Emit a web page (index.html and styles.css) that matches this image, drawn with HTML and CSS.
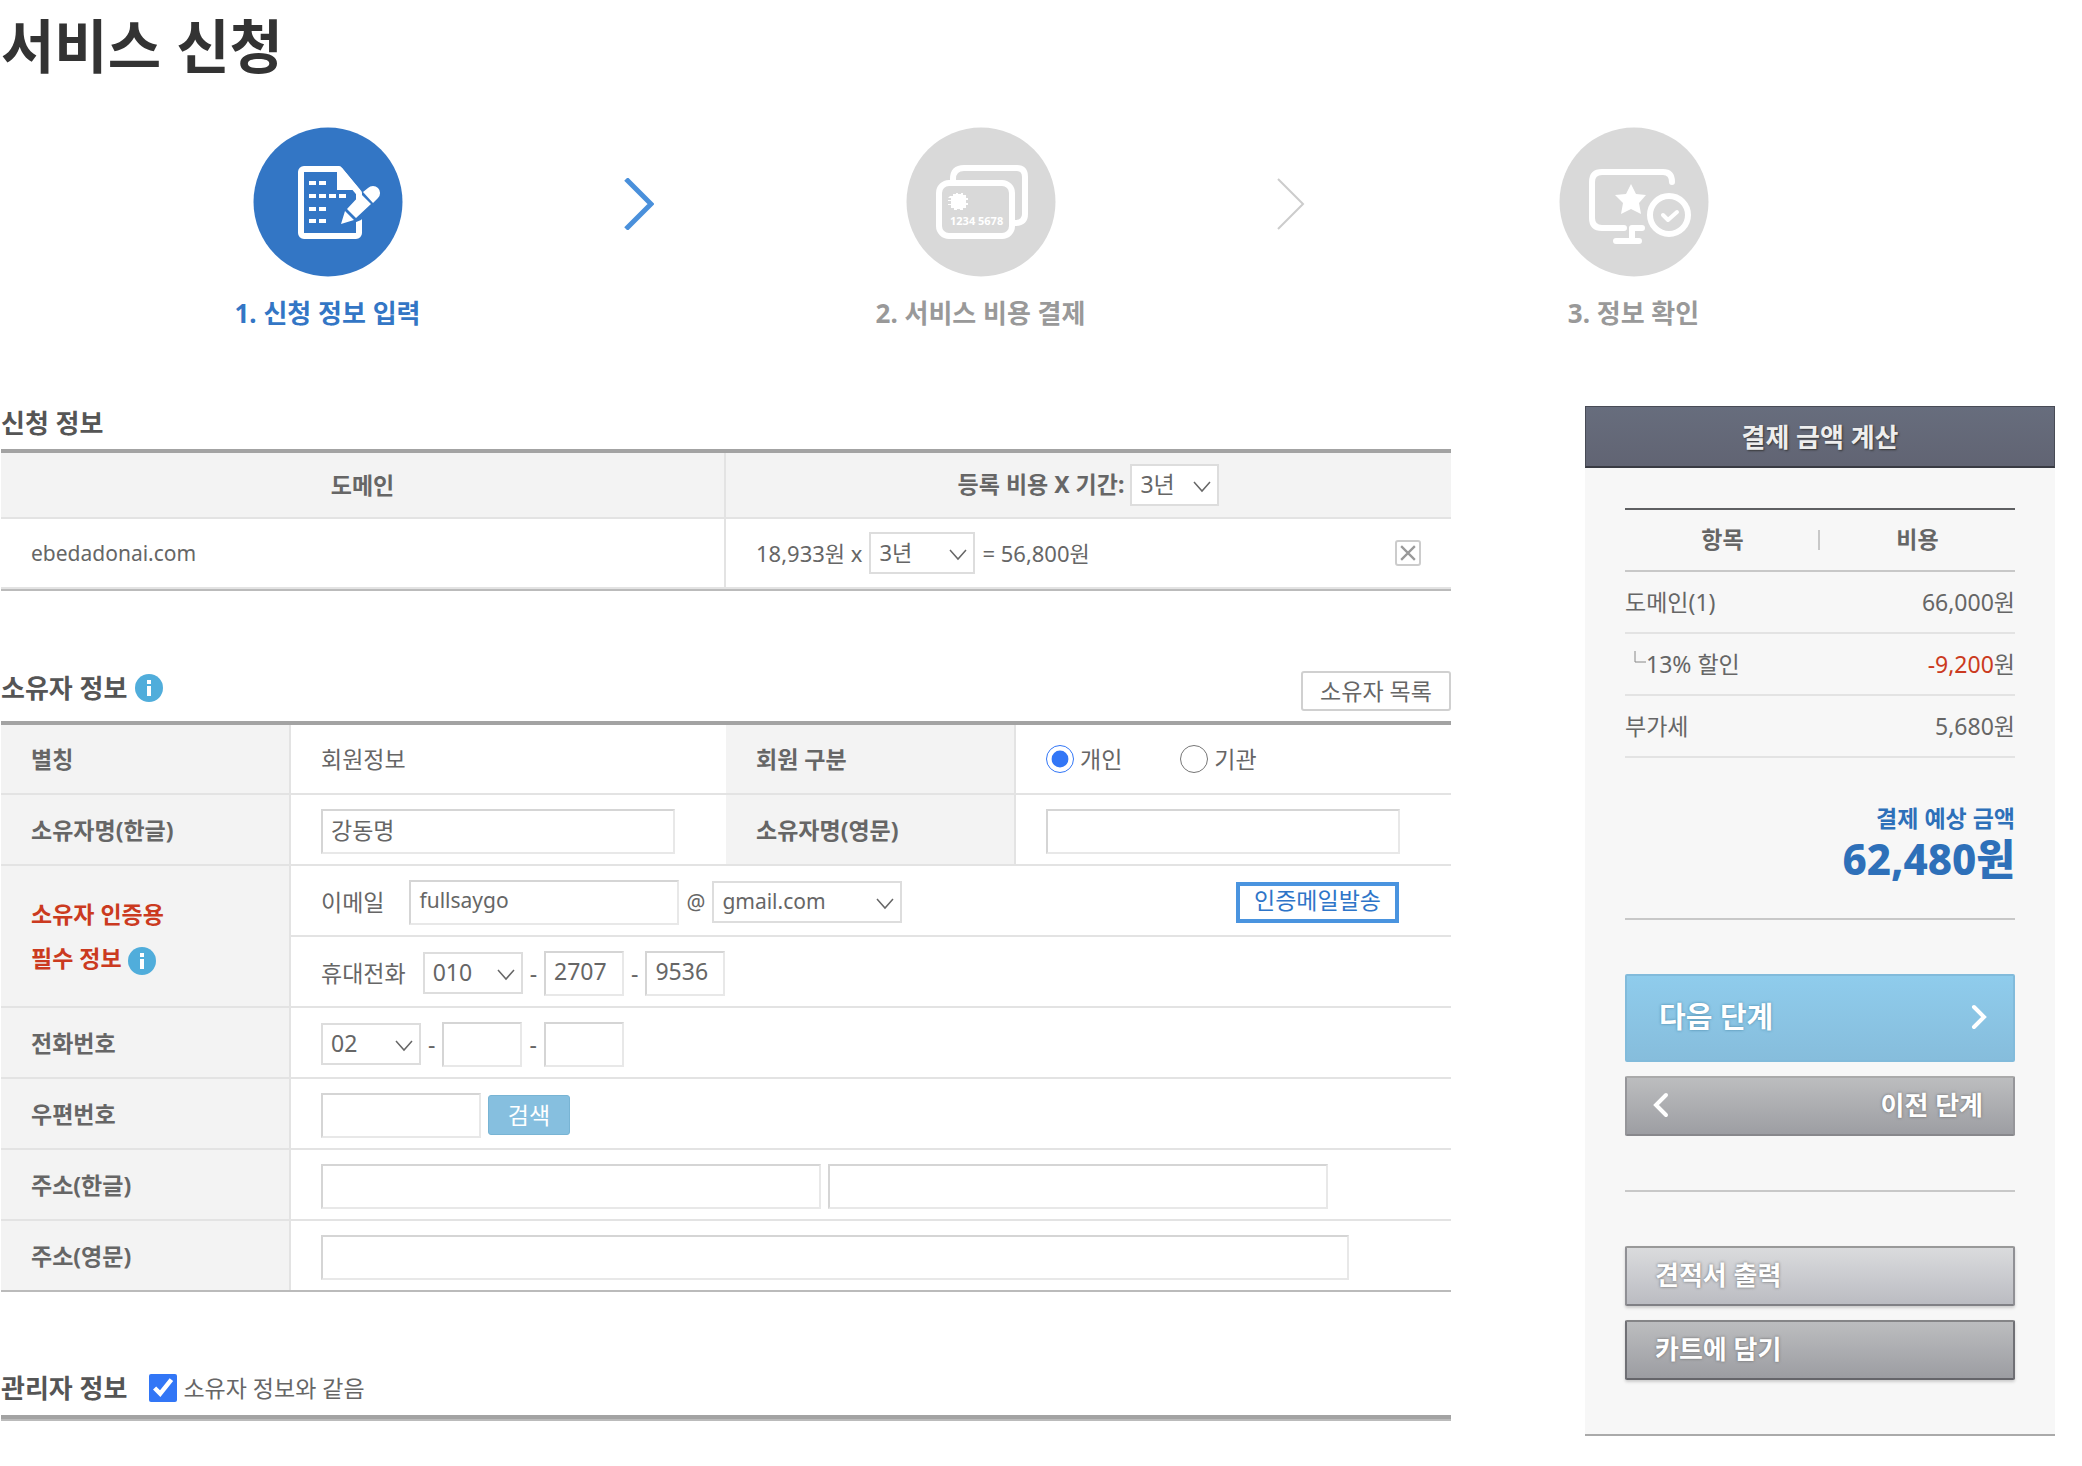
FILE: index.html
```html
<!DOCTYPE html>
<html lang="ko">
<head>
<meta charset="utf-8">
<meta name="viewport" content="width=device-width, initial-scale=1">
<title>서비스 신청</title>
<link rel="stylesheet" href="styles.css">
</head>
<body>
<div class="page">
  <h1 class="page-title">서비스 신청</h1>

  <ol class="steps">
    <li class="step step-current">
      <svg class="step-icon" viewBox="0 0 150 150" aria-hidden="true">
        <circle class="disc" cx="75" cy="75" r="74.5"/>
        <path class="line" stroke-width="6" d="M106 88V106a3 3 0 0 1-3 3H51a3 3 0 0 1-3-3V45a3 3 0 0 1 3-3h35l20 24v6"/>
        <path class="solid" d="M84 41h5l18 22h-23z"/>
        <path class="dash" d="M56 56h17M56 69h37M56 82h17M56 94h17"/>
        <path class="cut" d="M89 101l6-19 21-21a8 8 0 0 1 12 12l-20 20z"/>
        <path class="solid" d="M88 97l4-13 9 9zM94 82l14-15 10 10-15 14zM110 65l5-4a7 7 0 0 1 10 10l-5 5z"/>
      </svg>
      <span class="step-name">1. 신청 정보 입력</span>
      <svg class="step-arrow" viewBox="0 0 30 52" aria-hidden="true"><path stroke-width="5" d="M2 1l25 25L2 51"/></svg>
    </li>
    <li class="step">
      <svg class="step-icon" viewBox="0 0 150 150" aria-hidden="true">
        <circle class="disc" cx="75" cy="75" r="74.5"/>
        <path class="line" stroke-width="6" d="M47 54v-2q0-11 11-11h53q8 0 8 9v37q0 9-10 9"/>
        <rect class="line" stroke-width="6" x="33" y="56" width="73" height="53" rx="10"/>
        <path class="solid" d="M44 69h3v-2h3v-1h2v1h3v-1h2v2h3v3h2v2h-2v3h2v2h-2v3h-3v2h-3v-1h-3v1h-3v-2h-3v-3h-3v-1h3v-3h-3v-1h3v-2h-3z"/>
        <text class="card-number" x="44" y="98">1234 5678</text>
      </svg>
      <span class="step-name">2. 서비스 비용 결제</span>
      <svg class="step-arrow" viewBox="0 0 30 52" aria-hidden="true"><path stroke-width="2" d="M1 1l25 25L1 51"/></svg>
    </li>
    <li class="step">
      <svg class="step-icon" viewBox="0 0 150 150" aria-hidden="true">
        <circle class="disc" cx="75" cy="75" r="74.5"/>
        <path class="line" stroke-width="6" d="M113 55q0-10-9-10H43q-10 0-10 10v36q0 10 10 10h22M83 101h-10v12M57 114h23"/>
        <path class="solid" d="M72 57l5 10 10 1-7 8 2 11-10-5-10 5 2-11-8-8 11-1z"/>
        <circle class="line" stroke-width="6" cx="110" cy="88" r="19"/>
        <path class="line" stroke-width="4" d="M104 88l5 5 9-8"/>
      </svg>
      <span class="step-name">3. 정보 확인</span>
    </li>
  </ol>

  <div class="columns">
    <main>
      <section class="section">
        <div class="section-head">
          <h2>신청 정보</h2>
        </div>
        <table class="grid order">
          <thead>
            <tr>
              <th scope="col">도메인</th>
              <th scope="col"><label for="period-all">등록 비용 X 기간:</label>
                <select id="period-all" class="w-xs"><option>3년</option></select></th>
            </tr>
          </thead>
          <tbody>
            <tr>
              <td class="latin">ebedadonai.com</td>
              <td>
                <div class="fields price">
                  <span>18,933원 x</span>
                  <select class="w-md" aria-label="등록 기간"><option>3년</option></select>
                  <span>= 56,800원</span>
                  <button type="button" class="remove" aria-label="삭제"><svg viewBox="0 0 14 14" aria-hidden="true"><path d="M1 1l12 12M13 1L1 13"/></svg></button>
                </div>
              </td>
            </tr>
          </tbody>
        </table>
      </section>

      <section class="section">
        <div class="section-head">
          <h2>소유자 정보</h2>
          <svg class="info" viewBox="0 0 28 28" aria-hidden="true"><circle cx="14" cy="14" r="14"/><path d="M12 6h4v4h-4zM12 12h4v10h-4z"/></svg>
          <button type="button" class="btn-list">소유자 목록</button>
        </div>
        <table class="grid owner">
          <colgroup><col class="col-name"><col class="col-value"><col class="col-name"><col class="col-value"></colgroup>
          <tbody>
            <tr>
              <th scope="row">별칭</th>
              <td>회원정보</td>
              <th scope="row">회원 구분</th>
              <td>
                <div class="choices">
                  <label class="choice"><input type="radio" name="kind" checked>개인</label>
                  <label class="choice"><input type="radio" name="kind">기관</label>
                </div>
              </td>
            </tr>
            <tr>
              <th scope="row"><label for="name-ko">소유자명(한글)</label></th>
              <td class="form"><input id="name-ko" class="text w-name" type="text" value="강동명"></td>
              <th scope="row"><label for="name-en">소유자명(영문)</label></th>
              <td class="form"><input id="name-en" class="text w-name" type="text"></td>
            </tr>
            <tr>
              <th scope="row" rowspan="2" class="required">소유자 인증용<br>필수 정보
                <svg class="info" viewBox="0 0 28 28" aria-hidden="true"><circle cx="14" cy="14" r="14"/><path d="M12 6h4v4h-4zM12 12h4v10h-4z"/></svg></th>
              <td colspan="3" class="form">
                <div class="fields">
                  <label class="lead" for="email">이메일</label>
                  <input id="email" class="text latin w-mail" type="text" value="fullsaygo">
                  <span class="latin">@</span>
                  <select class="latin w-xl" aria-label="메일 도메인"><option>gmail.com</option></select>
                  <button type="button" class="btn-verify">인증메일발송</button>
                </div>
              </td>
            </tr>
            <tr>
              <td colspan="3" class="form">
                <div class="fields">
                  <label class="lead-phone" for="mobile">휴대전화</label>
                  <select id="mobile" class="w-sm"><option>010</option></select>
                  <span>-</span>
                  <input class="text w-num" type="text" value="2707" aria-label="휴대전화 가운데 자리">
                  <span>-</span>
                  <input class="text w-num" type="text" value="9536" aria-label="휴대전화 끝자리">
                </div>
              </td>
            </tr>
            <tr>
              <th scope="row"><label for="tel">전화번호</label></th>
              <td colspan="3" class="form">
                <div class="fields">
                  <select id="tel" class="w-sm"><option>02</option></select>
                  <span>-</span>
                  <input class="text w-num" type="text" aria-label="전화번호 가운데 자리">
                  <span>-</span>
                  <input class="text w-num" type="text" aria-label="전화번호 끝자리">
                </div>
              </td>
            </tr>
            <tr>
              <th scope="row"><label for="zip">우편번호</label></th>
              <td colspan="3" class="form">
                <div class="fields">
                  <input id="zip" class="text w-zip" type="text">
                  <button type="button" class="btn-search">검색</button>
                </div>
              </td>
            </tr>
            <tr>
              <th scope="row"><label for="addr-ko">주소(한글)</label></th>
              <td colspan="3" class="form">
                <div class="fields">
                  <input id="addr-ko" class="text w-addr" type="text">
                  <input class="text w-addr" type="text" aria-label="상세 주소">
                </div>
              </td>
            </tr>
            <tr>
              <th scope="row"><label for="addr-en">주소(영문)</label></th>
              <td colspan="3" class="form"><input id="addr-en" class="text w-addr-en" type="text"></td>
            </tr>
          </tbody>
        </table>
      </section>

      <section class="section manager">
        <div class="section-head">
          <h2>관리자 정보</h2>
          <label class="choice same"><input type="checkbox" checked>소유자 정보와 같음</label>
        </div>
      </section>
    </main>

    <aside class="summary">
      <h2 class="summary-title">결제 금액 계산</h2>
      <div class="summary-body">
        <table class="costs">
          <thead>
            <tr><th scope="col">항목</th><th scope="col">비용</th></tr>
          </thead>
          <tbody>
            <tr><td>도메인(1)</td><td>66,000원</td></tr>
            <tr><td class="sub"><svg class="branch" viewBox="0 0 12 22" aria-hidden="true"><path d="M1 0v11h11"/></svg>13% 할인</td><td><em>-9,200</em>원</td></tr>
            <tr><td>부가세</td><td>5,680원</td></tr>
          </tbody>
        </table>
        <p class="total"><span>결제 예상 금액</span><strong>62,480원</strong></p>
        <div class="actions">
          <button type="button" class="btn btn-next">다음 단계<svg viewBox="0 0 16 26" aria-hidden="true"><path d="M3 3l10 10L3 23"/></svg></button>
          <button type="button" class="btn btn-prev"><svg viewBox="0 0 16 26" aria-hidden="true"><path d="M13 3L3 13l10 10"/></svg>이전 단계</button>
        </div>
        <div class="actions">
          <button type="button" class="btn btn-light">견적서 출력</button>
          <button type="button" class="btn btn-dark">카트에 담기</button>
        </div>
      </div>
    </aside>
  </div>
</div>
</body>
</html>
```
FILE: styles.css
```css
* {
  box-sizing: border-box;
}

body {
  margin: 0;
  background: #fff;
  color: #666;
  font: 23px/32px "Noto Sans", "Noto Sans CJK KR", sans-serif;
}

button,
input,
select {
  margin: 0;
  color: inherit;
  font: inherit;
}

h1,
h2,
ol,
p {
  margin: 0;
  padding: 0;
}

.page {
  padding: 0 27px 0 1px;
}

.page-title {
  color: #333;
  font-size: 58px;
  font-weight: 700;
  line-height: 92px;
}

/* Progress steps */
.steps {
  display: grid;
  grid-template-columns: repeat(3, 1fr);
  margin-right: 95px;
  padding: 35px 0 77px;
  list-style: none;
}

.step {
  position: relative;
  display: flex;
  flex-direction: column;
  align-items: center;
  gap: 20px;
  color: #999;
}

.step-icon {
  width: 150px;
  height: 150px;
}

.step-name {
  font-size: 26px;
  font-weight: 700;
}

.disc {
  fill: #d9d9d9;
}

.line {
  fill: none;
  stroke: #fff;
  stroke-linecap: round;
  stroke-linejoin: round;
}

.solid {
  fill: #fff;
}

.dash {
  fill: none;
  stroke: #fff;
  stroke-width: 4;
  stroke-dasharray: 7 3;
}

.card-number {
  fill: #fff;
  font-size: 11px;
  font-weight: 700;
}

.step-arrow {
  position: absolute;
  top: 51px;
  right: 0;
  width: 30px;
  height: 52px;
  fill: none;
  stroke: #ccc;
}

.step-current {
  color: #3376c5;
}

.step-current .disc,
.step-current .cut {
  fill: #3376c5;
}

.step-current .step-arrow {
  stroke: #4a90db;
}

/* Main columns */
.columns {
  display: grid;
  grid-template-columns: minmax(0, 1fr) 470px;
  gap: 134px;
  align-items: start;
}

.section {
  margin-bottom: 74px;
}

.section-head {
  display: flex;
  align-items: center;
  gap: 8px;
  height: 56px;
  padding-bottom: 10px;
}

.section:first-child .section-head {
  height: 43px;
}

.section-head h2 {
  color: #555;
  font-size: 26px;
  font-weight: 700;
}

.info {
  width: 28px;
  height: 28px;
  fill: #50addb;
}

.info path {
  fill: #fff;
}

/* Tables */
.grid {
  width: 100%;
  border-top: 4px solid #a3a3a3;
  border-bottom: 2px solid #bbb;
  border-spacing: 0;
  table-layout: fixed;
}

.grid th,
.grid td {
  height: 71px;
  padding: 0 30px;
  border-bottom: 2px solid #e3e3e3;
  text-align: left;
}

.grid th {
  background: #f3f3f3;
  font-weight: 700;
}

.order th {
  height: 66px;
  text-align: center;
}

.order td {
  height: 70px;
}

.order th:first-child,
.order td:first-child,
.owner th {
  border-right: 2px solid #e3e3e3;
}

.owner .col-name {
  width: 20%;
}

.owner .col-value {
  width: 30%;
}

.owner tr:first-child > * {
  height: 70px;
}

.owner tr:last-child > * {
  height: 69px;
  border-bottom: 0;
}

.grid td.form {
  padding-top: 3px;
}

.grid .required {
  color: #cb3a20;
  line-height: 44px;
}

.required .info {
  vertical-align: middle;
}

/* Fields */
.fields {
  display: flex;
  align-items: center;
  gap: 7px;
}

.price {
  font-size: 22px;
}

.latin {
  font-size: 21px;
}

.lead {
  margin-right: 18px;
}

.lead-phone {
  margin-right: 10px;
}

.text {
  display: block;
  height: 45px;
  padding: 0 8px 4px;
  border: 2px solid;
  border-color: #d5d5d5 #e8e8e8 #e8e8e8 #d5d5d5;
  border-radius: 0;
  background: #fff;
}

select {
  height: 42px;
  padding: 0 8px 2px;
  border: 2px solid #ddd;
  border-radius: 0;
  background: #fff url("data:image/svg+xml,%3Csvg xmlns='http://www.w3.org/2000/svg' width='18' height='12'%3E%3Cpath d='M1 1l8 9 8-9' fill='none' stroke='%23666' stroke-width='1.5'/%3E%3C/svg%3E") no-repeat right 6px top 15px;
  font-weight: 400;
  appearance: none;
}

.w-xs { width: 89px; }
.w-sm { width: 100px; }
.w-md { width: 106px; }
.w-xl { width: 190px; }
.w-num { width: 80px; }
.w-zip { width: 160px; }
.w-mail { width: 270px; }
.w-name { width: 354px; }
.w-addr { width: 500px; }
.w-addr-en { width: 1028px; }

.choices {
  display: flex;
  gap: 58px;
}

.choice {
  display: flex;
  align-items: center;
  gap: 6px;
}

.same {
  margin-left: 14px;
}

.choice input {
  width: 28px;
  height: 28px;
  accent-color: #3276f6;
}

/* Small buttons */
.remove {
  display: flex;
  align-items: center;
  justify-content: center;
  width: 26px;
  height: 26px;
  margin-left: auto;
  padding: 0;
  border: 2px solid #ccc;
  border-radius: 3px;
  background: #fff;
}

.remove svg {
  width: 16px;
  height: 16px;
  fill: none;
  stroke: #999;
  stroke-width: 2;
}

.btn-list {
  align-self: flex-end;
  width: 150px;
  height: 40px;
  margin-left: auto;
  padding: 0;
  border: 2px solid #d0d0d0;
  border-radius: 3px;
  background: #fff;
}

.btn-verify {
  width: 163px;
  height: 41px;
  margin-left: auto;
  margin-right: 22px;
  padding: 0 0 6px;
  border: 4px solid #4a94df;
  background: #fff;
  color: #2e75c8;
  line-height: 28px;
}

.btn-search {
  width: 82px;
  height: 40px;
  padding: 0;
  border: 1px solid #78b4d4;
  border-radius: 3px;
  background: #86bfdf;
  color: #fff;
}

.manager {
  margin-bottom: 0;
  border-bottom: 2px solid #bbb;
}

.manager .section-head {
  height: 53px;
  padding-bottom: 6px;
  border-bottom: 4px solid #a3a3a3;
}

/* Payment summary */
.summary {
  border-bottom: 2px solid #aaa;
  background: #f7f7f7;
}

.summary-title {
  height: 62px;
  border: 1px solid #484b55;
  border-bottom: 2px solid #393b43;
  background: linear-gradient(#676d7d, #616473);
  color: #eee;
  font-size: 26px;
  font-weight: 700;
  line-height: 60px;
  text-align: center;
  text-shadow: 1px 1px 2px #333;
}

.summary-body {
  padding: 40px 40px 54px;
}

.costs {
  width: 100%;
  border-top: 2px solid #5f6062;
  border-spacing: 0;
}

.costs th,
.costs td {
  height: 62px;
  padding: 0;
  border-bottom: 2px solid #e3e3e3;
  text-align: left;
}

.costs th {
  width: 50%;
  padding-bottom: 3px;
  border-color: #c8c8c8;
  font-weight: 700;
  text-align: center;
}

.costs th:first-child {
  background: linear-gradient(#c8c8c8, #c8c8c8) no-repeat right center / 2px 20px;
}

.costs td:last-child {
  text-align: right;
}

.costs em {
  color: #cb3a20;
  font-style: normal;
}

.costs .sub {
  padding-left: 9px;
}

.branch {
  width: 12px;
  height: 22px;
  fill: none;
  stroke: #888;
  stroke-width: 1;
}

.total {
  display: flex;
  flex-direction: column;
  padding: 44px 0 34px;
  color: #2e70b9;
  font-weight: 700;
  text-align: right;
}

.total strong {
  font-size: 42px;
  font-weight: 800;
  line-height: 50px;
}

.actions {
  display: grid;
  gap: 14px;
  padding: 54px 0;
  border-top: 2px solid #c8c8c8;
}

.actions + .actions {
  padding-bottom: 0;
}

.btn {
  display: flex;
  align-items: center;
  justify-content: space-between;
  height: 60px;
  padding: 0 28px 2px;
  border: 2px solid;
  border-radius: 2px;
  color: #fff;
  font-size: 26px;
  font-weight: 700;
  text-shadow: 0 0 3px #666;
}

.btn svg {
  width: 16px;
  height: 26px;
  fill: none;
  stroke: #fff;
  stroke-width: 4;
  stroke-linecap: round;
}

.btn-next {
  height: 88px;
  padding: 0 26px 2px 32px;
  border-color: #82bbdb;
  background: linear-gradient(#8fccec, #86bddc);
  font-size: 29px;
  text-shadow: 0 0 3px #4787a8;
}

.btn-prev {
  padding: 0 30px 2px 26px;
  border-color: #aaa #96969a #88888c;
  background: linear-gradient(#bcbdbf, #9d9ea3);
}

.btn-light {
  border-color: #999 #909095 #808085;
  background: linear-gradient(#dadbdd, #bbbcc2);
  box-shadow: 0 2px 3px #ccc;
}

.btn-dark {
  border-color: #858587 #707075 #65656a;
  background: linear-gradient(#bcbdbf, #9c9da2);
  box-shadow: 0 2px 3px #ccc;
}
```
